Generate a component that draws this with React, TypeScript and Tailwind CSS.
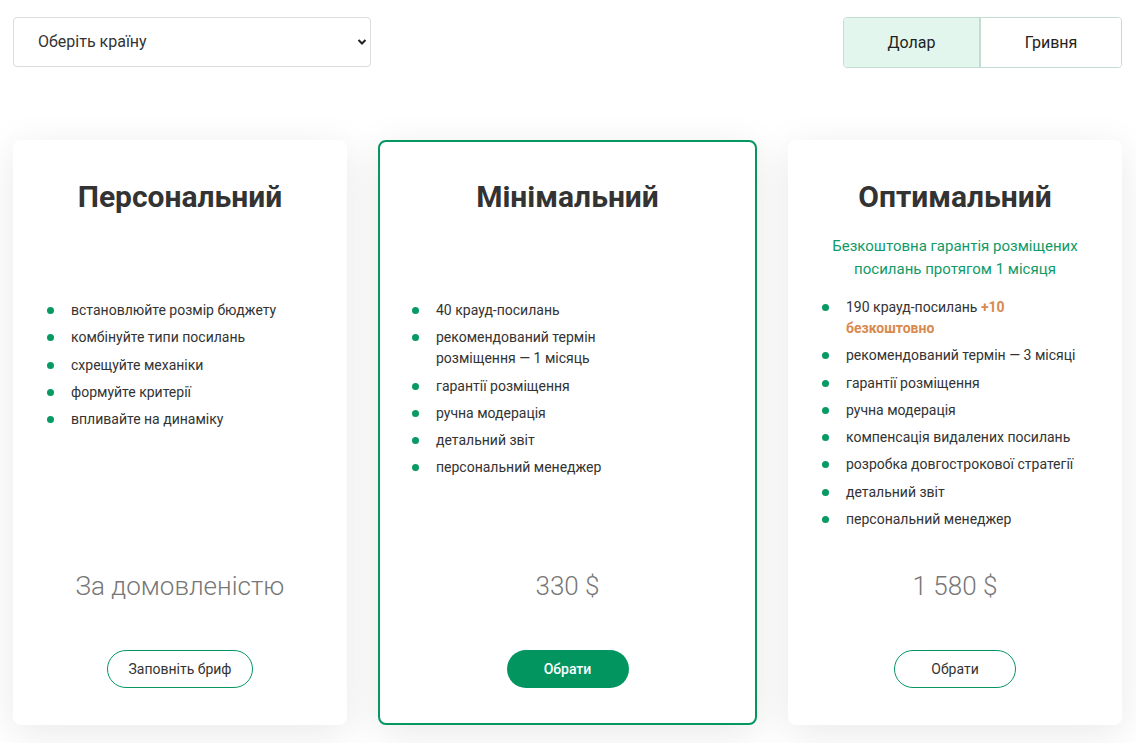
import React, { useState } from 'react';

type Plan = {
  id: string;
  title: string;
  subtitle?: string;
  items: React.ReactNode[];
  price: string;
  cta: string;
  featured?: boolean;
};

const plans: Plan[] = [
  {
    id: 'personal',
    title: 'Персональний',
    items: [
      'встановлюйте розмір бюджету',
      'комбінуйте типи посилань',
      'схрещуйте механіки',
      'формуйте критерії',
      'впливайте на динаміку',
    ],
    price: 'За домовленістю',
    cta: 'Заповніть бриф',
  },
  {
    id: 'minimal',
    title: 'Мінімальний',
    items: [
      '40 крауд-посилань',
      'рекомендований термін розміщення — 1 місяць',
      'гарантії розміщення',
      'ручна модерація',
      'детальний звіт',
      'персональний менеджер',
    ],
    price: '330 $',
    cta: 'Обрати',
    featured: true,
  },
  {
    id: 'optimal',
    title: 'Оптимальний',
    subtitle: 'Безкоштовна гарантія розміщених посилань протягом 1 місяця',
    items: [
      <>
        190 крауд-посилань <span className="font-bold text-[#d98a4f]">+10 безкоштовно</span>
      </>,
      'рекомендований термін — 3 місяці',
      'гарантії розміщення',
      'ручна модерація',
      'компенсація видалених посилань',
      'розробка довгострокової стратегії',
      'детальний звіт',
      'персональний менеджер',
    ],
    price: '1 580 $',
    cta: 'Обрати',
  },
];

const PlanCard: React.FC<{ plan: Plan }> = ({ plan }) => (
  <div
    className={`flex flex-col rounded-lg bg-white shadow-[0_8px_40px_rgba(0,0,0,0.09)] ${
      plan.featured ? 'border-2 border-[#069660]' : ''
    }`}
  >
    <div className={`flex flex-1 flex-col ${plan.featured ? 'pt-[37px] pb-[35px]' : 'pt-[39px] pb-[37px]'}`}>
      <h2 className="text-center text-[30px] leading-[36px] font-bold text-[#333]">{plan.title}</h2>

      {plan.subtitle ? (
        <p className="mx-auto mt-5 mb-4 w-[270px] text-center text-[15px] leading-[23px] text-[#0f9a68]">
          {plan.subtitle}
        </p>
      ) : (
        <div className="h-[85px]" />
      )}

      <ul className={`flex flex-col gap-[6.3px] ${plan.featured ? 'pl-8' : 'pl-[34px]'}`}>
        {plan.items.map((item, i) => (
          <li key={i} className="flex items-start text-[14px] leading-[21px] text-[#333]">
            <span className="mt-[7px] mr-[17px] h-[7px] w-[7px] shrink-0 rounded-full bg-[#079a63]" />
            <span className="w-[235px]">{item}</span>
          </li>
        ))}
      </ul>

      <div className="mt-auto pt-[41px] text-center text-[26px] leading-[30px] font-light text-[#777]">
        {plan.price}
      </div>

      <div className="mt-[49px] flex justify-center">
        <button
          className={`h-[38px] min-w-[122px] rounded-full px-5 text-[14px] ${
            plan.featured
              ? 'bg-[#039560] font-medium text-white'
              : 'border border-[#069660] bg-white font-normal text-[#333]'
          }`}
        >
          {plan.cta}
        </button>
      </div>
    </div>
  </div>
);

export default function App() {
  const [currency, setCurrency] = useState<'usd' | 'uah'>('usd');

  return (
    <div className="min-h-[743px] bg-white px-[13px] pt-[17px] pb-[18px] font-['Roboto',sans-serif]">
      {/* Top controls */}
      <div className="flex items-start justify-between">
        <div className="relative w-[358px]">
          <select className="h-[50px] w-full appearance-none rounded border border-[#dcdcdc] bg-white pl-6 text-[16px] text-[#333] outline-none">
            <option>Оберіть країну</option>
          </select>
          <svg
            className="pointer-events-none absolute top-1/2 right-[4px] -translate-y-1/2"
            width="10"
            height="7"
            viewBox="0 0 10 7"
          >
            <polyline points="1.5,1.5 5,5 8.5,1.5" fill="none" stroke="#222" strokeWidth="2" />
          </svg>
        </div>

        <div className="mr-px flex h-[51px] w-[279px] overflow-hidden rounded border border-[#c3ddd2]">
          <button
            onClick={() => setCurrency('usd')}
            className={`w-[137px] border-r-2 border-[#c3ddd2] text-[16px] text-[#222] ${
              currency === 'usd' ? 'bg-[#e2f6ee]' : 'bg-white'
            }`}
          >
            Долар
          </button>
          <button
            onClick={() => setCurrency('uah')}
            className={`flex-1 text-[16px] text-[#222] ${currency === 'uah' ? 'bg-[#e2f6ee]' : 'bg-white'}`}
          >
            Гривня
          </button>
        </div>
      </div>

      {/* Plans */}
      <div className="mt-[72px] grid grid-cols-[334px_379px_334px] gap-[31px]">
        {plans.map((plan) => (
          <PlanCard key={plan.id} plan={plan} />
        ))}
      </div>
    </div>
  );
}
